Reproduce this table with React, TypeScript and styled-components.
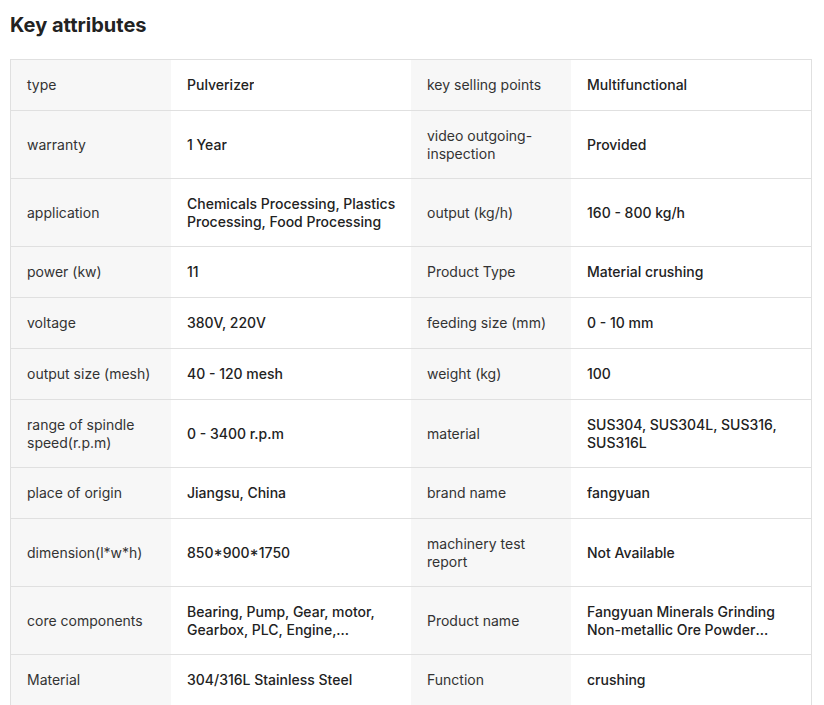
import React from "react";
import styled, { createGlobalStyle } from "styled-components";

const Global = createGlobalStyle`
  html, body { margin: 0; padding: 0; background: #fff; }
  body { font-family: Inter, "Noto Sans", "Liberation Sans", sans-serif; color: #222; }
`;

const Page = styled.div`
  padding: 11px 10px 0 10px;
`;

const Title = styled.h2`
  margin: 0 0 20px 0;
  font-size: 20px;
  line-height: 28px;
  font-weight: 700;
  color: #222;
`;

const Table = styled.div`
  width: 800px;
  border: 1px solid #e0e0e0;
  display: grid;
  grid-template-columns: 160px 240px 160px 240px;
`;

const Cell = styled.div<{ $label?: boolean; $last?: boolean }>`
  box-sizing: border-box;
  min-height: ${(p) => (p.$last ? "50px" : "51px")};
  padding: 16px 12px 16px 16px;
  font-size: 14px;
  line-height: 17.5px;
  display: flex;
  align-items: center;
  background: ${(p) => (p.$label ? "#f7f7f7" : "#fff")};
  color: ${(p) => (p.$label ? "#333" : "#222")};
  font-weight: ${(p) => (p.$label ? 400 : 500)};
  border-bottom: ${(p) => (p.$last ? "none" : "1px solid #e0e0e0")};
`;

const Clamp = styled.span`
  display: -webkit-box;
  -webkit-line-clamp: 2;
  -webkit-box-orient: vertical;
  overflow: hidden;
`;

const rows: [string, string, string, string][] = [
  ["type", "Pulverizer", "key selling points", "Multifunctional"],
  ["warranty", "1 Year", "video outgoing-inspection", "Provided"],
  ["application", "Chemicals Processing, Plastics Processing, Food Processing", "output (kg/h)", "160 - 800 kg/h"],
  ["power (kw)", "11", "Product Type", "Material crushing"],
  ["voltage", "380V, 220V", "feeding size (mm)", "0 - 10 mm"],
  ["output size (mesh)", "40 - 120 mesh", "weight (kg)", "100"],
  ["range of spindle speed(r.p.m)", "0 - 3400 r.p.m", "material", "SUS304, SUS304L, SUS316, SUS316L"],
  ["place of origin", "Jiangsu, China", "brand name", "fangyuan"],
  ["dimension(l*w*h)", "850*900*1750", "machinery test report", "Not Available"],
  ["core components", "Bearing, Pump, Gear, motor, Gearbox, PLC, Engine, Pressure vessel", "Product name", "Fangyuan Minerals Grinding Non-metallic Ore Powder Crusher Machine"],
  ["Material", "304/316L Stainless Steel", "Function", "crushing"],
];

export default function App() {
  return (
    <Page>
      <Global />
      <Title>Key attributes</Title>
      <Table>
        {rows.map((r, i) => {
          const last = i === rows.length - 1;
          return (
            <React.Fragment key={i}>
              <Cell $label $last={last}>{r[0]}</Cell>
              <Cell $last={last}><Clamp>{r[1]}</Clamp></Cell>
              <Cell $label $last={last}>{r[2]}</Cell>
              <Cell $last={last}><Clamp>{r[3]}</Clamp></Cell>
            </React.Fragment>
          );
        })}
      </Table>
    </Page>
  );
}
